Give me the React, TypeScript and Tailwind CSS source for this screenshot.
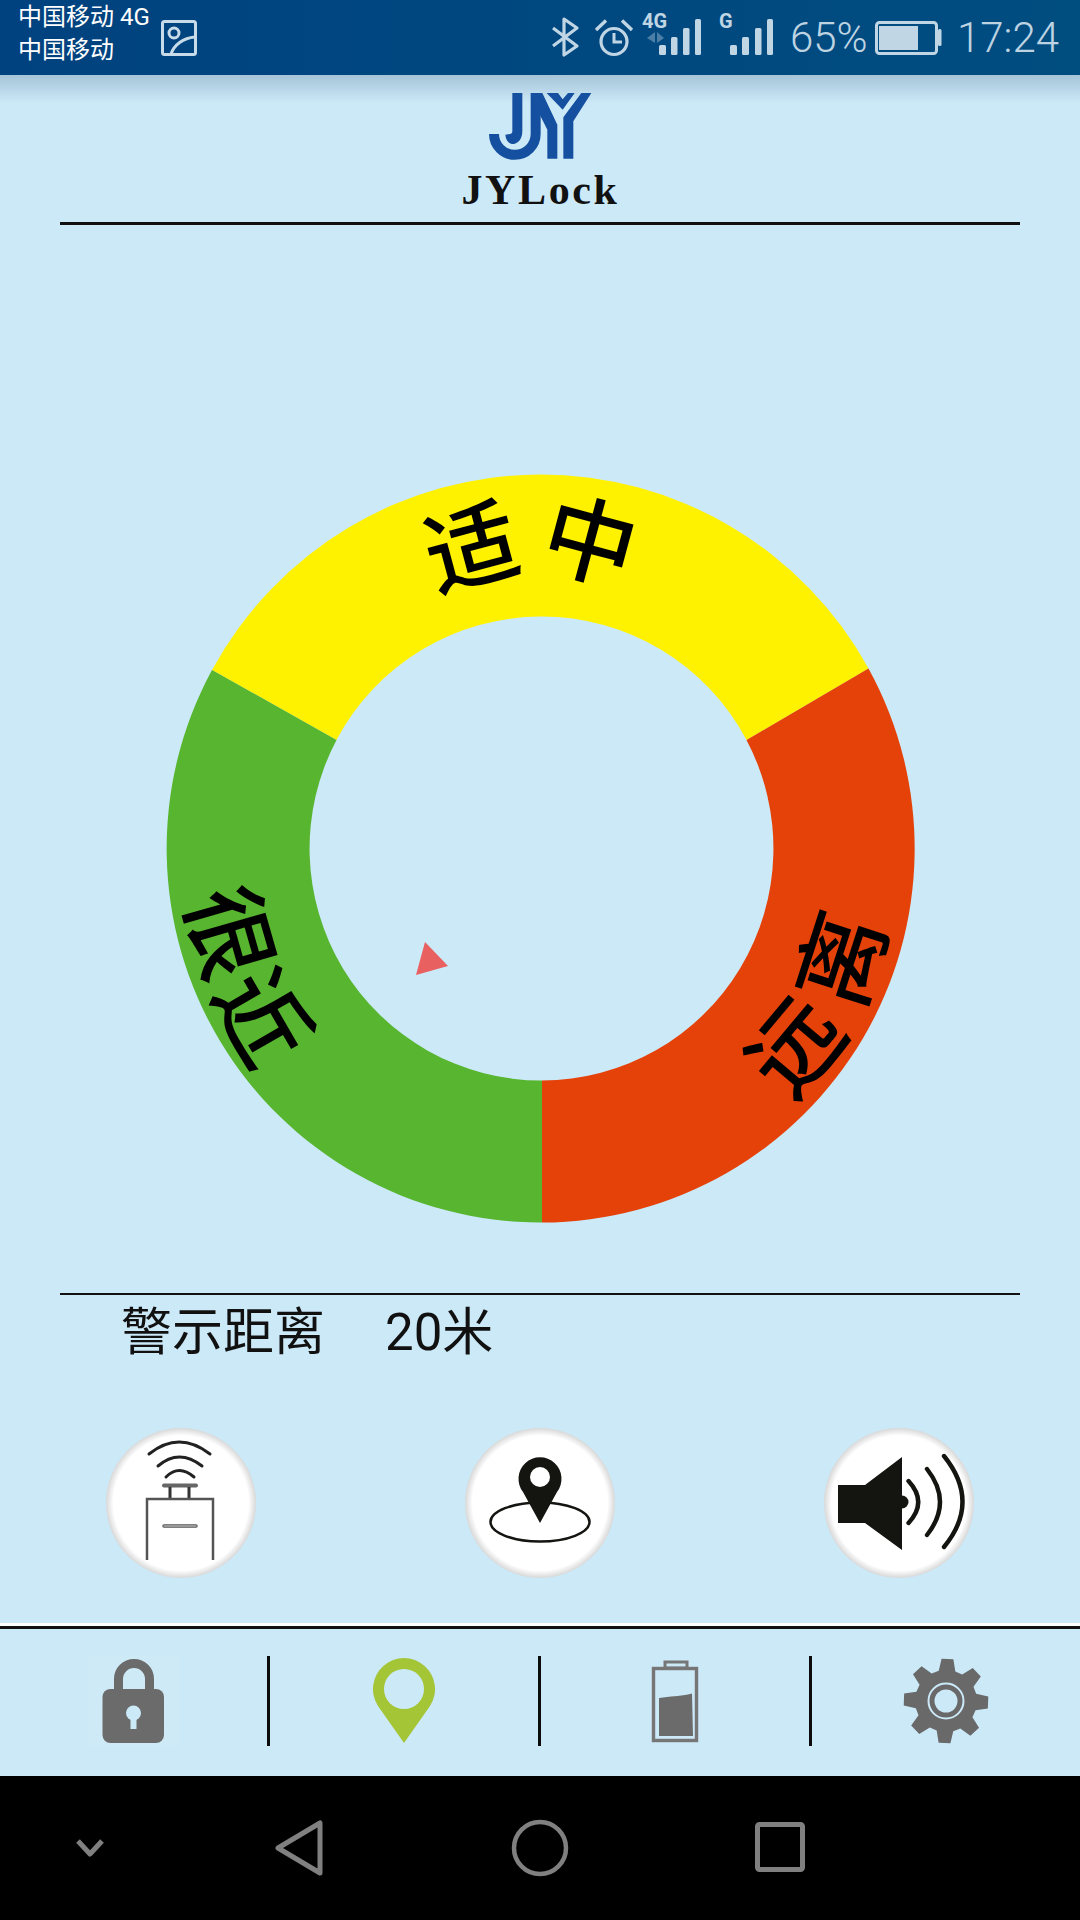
import React from "react";

const cjk = "font-['Roboto','Noto_Sans_CJK_SC',sans-serif]";

function gearPath(cx: number, cy: number, ro: number, ri: number, teeth: number, rot: number) {
  const pts: string[] = [];
  for (let i = 0; i < teeth; i++) {
    const a = rot + (i * 360) / teeth;
    const seq: [number, number][] = [
      [a - 15.5, ri],
      [a - 8, ro],
      [a + 8, ro],
      [a + 15.5, ri],
    ];
    seq.forEach(([d, r]) => {
      const t = ((d - 90) * Math.PI) / 180;
      pts.push(`${(cx + r * Math.cos(t)).toFixed(2)} ${(cy + r * Math.sin(t)).toFixed(2)}`);
    });
  }
  return "M" + pts.join("L") + "Z";
}

function StatusBar() {
  const c = "#c0d6e5";
  return (
    <div className="h-[75px] shrink-0 flex items-center bg-gradient-to-r from-[#00427f] to-[#004d80]">
      <div className={`ml-[18px] mb-[7px] w-[142px] text-[24px] leading-[33px] text-white ${cjk}`}>
        <div>中国移动 4G</div>
        <div>中国移动</div>
      </div>
      <svg width="38" height="38" viewBox="159 18 38 38" fill="none" stroke="#c7dbe9" strokeWidth="3">
        <rect x="161.5" y="20.5" width="33" height="33" rx="2" />
        <circle cx="173" cy="32" r="5" />
        <path d="M170 53 C173 44 182 37 194 36" />
      </svg>
      <svg className="ml-[348px]" width="235" height="75" viewBox="545 0 235 75" fill="none" stroke={c}>
        <path d="M552 28 L576 46 L563 55 V19 L576 28 L552 46" strokeWidth="3.2" strokeLinejoin="round" />
        <circle cx="613" cy="41.5" r="13" strokeWidth="3.2" />
        <path d="M613 33 V42 H621" strokeWidth="3" />
        <path d="M595 30 L605 20.5 M621 20.5 L631 30" strokeWidth="3.4" />
        <text x="641" y="28" fontSize="20" fontWeight="700" fill={c} stroke="none" className="font-['Roboto',sans-serif]">4G</text>
        <text x="718" y="28" fontSize="20" fontWeight="700" fill={c} stroke="none" className="font-['Roboto',sans-serif]">G</text>
        <path d="M646 38 L654 32 V43 Z" fill="#4d7ea5" stroke="none" />
        <path d="M656 32 L663 38 L656 43 Z" fill="#4d7ea5" stroke="none" />
        <g fill={c} stroke="none">
          <rect x="658" y="45" width="7" height="10" rx="1.5" />
          <rect x="670" y="37" width="6.5" height="18" rx="1.5" />
          <rect x="682" y="28" width="6.5" height="27" rx="1.5" />
          <rect x="694" y="19" width="6" height="36" rx="1.5" />
          <rect x="729" y="45" width="7" height="10" rx="1.5" />
          <rect x="741" y="37" width="7" height="18" rx="1.5" />
          <rect x="754" y="28" width="6.5" height="27" rx="1.5" />
          <rect x="766" y="19" width="6" height="36" rx="1.5" />
        </g>
      </svg>
      <div className="ml-[9px] w-[84px] text-[42px] leading-none font-light text-[#bdd3e2] font-['Roboto',sans-serif]">65%</div>
      <svg width="68" height="38" viewBox="874 19 68 38" fill="none">
        <rect x="876.5" y="22.5" width="60" height="31" rx="3" stroke={c} strokeWidth="3" />
        <rect x="879" y="26" width="39" height="24" fill={c} />
        <rect x="938" y="29" width="3.5" height="17" rx="1.5" fill={c} />
      </svg>
      <div className="ml-[15px] text-[42px] leading-none font-light text-[#bdd3e2] font-['Roboto',sans-serif]">17:24</div>
    </div>
  );
}

function Logo() {
  return (
    <div className="h-[147px] shrink-0 flex flex-col items-center">
      <svg className="mt-[18px] ml-[2px]" width="104" height="68" viewBox="205 55 312 204" fill="#1550a0">
        <path d="M220 178 A62 62 0 0 0 345 178 V55" fill="none" stroke="#1550a0" strokeWidth="30" />
        <path d="M275 55 H305 V170 C305 195 290 208 278 208 C265 208 255 197 254 180 L268 178 C272 178 275 176 275 170 Z" />
        <path d="M335 55 H365 L410 150 V252 H380 V165 L335 75 Z" />
        <path d="M378 55 H412 L426 74 L442 55 H462 L426 105 Z" />
        <path d="M482 55 H512 L458 140 V252 H428 V128 Z" />
      </svg>
      <div className="mt-[5px] ml-[1px] text-[42px] leading-[48px] font-bold tracking-[2.6px] text-[#111] font-['Liberation_Serif',serif]">JYLock</div>
    </div>
  );
}

function Glyph({ x, y, r, t }: { x: number; y: number; r: number; t: string }) {
  return (
    <text
      x={0}
      y={0}
      transform={`translate(${x} ${y}) rotate(${r})`}
      textAnchor="middle"
      dominantBaseline="central"
      fontSize="92"
      fontWeight="500"
      fill="#000"
      className="font-['Noto_Sans_CJK_SC',sans-serif]"
    >
      {t}
    </text>
  );
}

function Ring() {
  return (
    <div className="h-[1068px] shrink-0 pt-[145px] pl-[61px]">
      <svg className="overflow-visible" width="960" height="960" viewBox="61 370 960 960">
        <path d="M212 670 A374 374 0 0 1 868.5 668.5 L746.5 740 A232 232 0 0 0 336.5 740 Z" fill="#fff200" />
        <path d="M868.5 668.5 A374 374 0 0 1 542 1222.5 V1080.5 A232 232 0 0 0 746.5 740 Z" fill="#e5420a" />
        <path d="M542 1222.5 A374 374 0 0 1 212 670 L336.5 740 A232 232 0 0 0 542 1080.5 Z" fill="#58b52f" />
        <Glyph x={470} y={541} r={-15} t="适" />
        <Glyph x={592} y={535} r={15} t="中" />
        <Glyph x={236} y={931} r={74} t="很" />
        <Glyph x={268} y={1014} r={60} t="近" />
        <Glyph x={835} y={957} r={-72} t="离" />
        <Glyph x={790} y={1042} r={-50} t="远" />
        <path d="M425 942 L448 966 L416 975 Z" fill="#e96060" />
      </svg>
    </div>
  );
}

function RoundButton({ children, className }: { children: React.ReactNode; className?: string }) {
  return (
    <div className={`relative w-[150px] h-[150px] rounded-full bg-[radial-gradient(circle_closest-side,#ffffff_90%,#d8d8d8_100%)] ${className ?? ""}`}>
      <svg className="absolute left-0 top-0" width="150" height="150" viewBox="0 0 150 150" fill="none">
        {children}
      </svg>
    </div>
  );
}

function Buttons() {
  const ink = "#141410";
  return (
    <div className="h-[149px] shrink-0 flex pl-[106px]">
      <RoundButton>
        <path d="M43 26 Q73 2 104 26" stroke="#222" strokeWidth="3" strokeLinecap="round" />
        <path d="M52 38 Q73 20 96 38" stroke="#222" strokeWidth="3" strokeLinecap="round" />
        <path d="M60 49 Q73 36 88 49" stroke="#222" strokeWidth="3" strokeLinecap="round" />
        <path d="M58 57.5 H90" stroke="#666" strokeWidth="4" strokeLinecap="round" />
        <path d="M64 59 V71 M83 59 V71" stroke="#333" strokeWidth="3" />
        <path d="M41 132 V71 H107 V132" stroke="#555" strokeWidth="2.5" />
        <path d="M58 98 H90" stroke="#555" strokeWidth="3.5" strokeLinecap="round" />
        <path d="M58 98 H90" stroke="#ddd" strokeWidth="1" strokeLinecap="round" />
      </RoundButton>
      <RoundButton className="ml-[209px]">
        <ellipse cx="75" cy="94" rx="49.5" ry="19.5" stroke={ink} strokeWidth="2.5" />
        <path d="M75 95 L58 64 A21.5 21.5 0 1 1 92 64 Z" fill={ink} />
        <circle cx="75" cy="49" r="10" fill="#fff" />
      </RoundButton>
      <RoundButton className="ml-[209px]">
        <path d="M14 57 H41 L78 29 V122 L41 95 H14 Z" fill={ink} />
        <circle cx="78" cy="74" r="6.5" fill={ink} />
        <path d="M84.5 53 Q104 74 84.5 95" stroke={ink} strokeWidth="4.4" strokeLinecap="round" />
        <path d="M103 41 Q129 74 103 107" stroke={ink} strokeWidth="4.4" strokeLinecap="round" />
        <path d="M120 28 Q157 74 120 119" stroke={ink} strokeWidth="4.4" strokeLinecap="round" />
      </RoundButton>
    </div>
  );
}

function Divider() {
  return <div className="w-[3px] h-[90px] shrink-0 bg-[#0c0c0c]" />;
}

function Tabs() {
  const g = "#6b6b6b";
  return (
    <div className="h-[147px] shrink-0 flex items-center pb-[3px]">
      <div className="w-[267px] flex justify-center">
        <svg className="bg-[#cfeaf7]" width="90" height="90" viewBox="0 0 90 90" fill="none">
          <path d="M29.5 36 V23 A15.5 15.5 0 0 1 60.5 23 V36" stroke={g} strokeWidth="9" />
          <rect x="13.5" y="33" width="61.5" height="54" rx="8" fill={g} />
          <circle cx="44.5" cy="57" r="7.5" fill="#cce9f8" />
          <rect x="41.5" y="58" width="6" height="15" fill="#cce9f8" />
        </svg>
      </div>
      <Divider />
      <div className="w-[268px] flex justify-center">
        <svg width="90" height="90" viewBox="0 0 90 90" fill="none">
          <path d="M45 87 L19 50 A31 31 0 1 1 71 50 Z" fill="#a4c535" />
          <circle cx="45" cy="33" r="20" fill="#cce9f8" />
        </svg>
      </div>
      <Divider />
      <div className="w-[268px] flex justify-center">
        <svg width="90" height="90" viewBox="0 0 90 90" fill="none">
          <rect x="23.5" y="12.5" width="43" height="72" stroke="#767676" strokeWidth="3.4" />
          <rect x="35" y="6" width="22" height="6" stroke="#767676" strokeWidth="3" />
          <path d="M29 42 L41 40.5 Q55 39.5 62 37.5 L63 80 H29 Z" fill={g} />
        </svg>
      </div>
      <Divider />
      <div className="w-[268px] flex justify-center">
        <svg width="90" height="90" viewBox="0 0 90 90" fill="none">
          <path d={gearPath(45, 45, 42.5, 31, 8, 2)} fill="#696969" />
          <circle cx="45" cy="45" r="17.5" stroke="#cce9f8" strokeWidth="2" />
          <circle cx="45" cy="45" r="11.5" fill="#cce9f8" />
        </svg>
      </div>
    </div>
  );
}

function NavBar() {
  const c = "#808080";
  return (
    <div className="h-[144px] shrink-0 bg-black flex items-center">
      <svg className="ml-[75px]" width="30" height="18" viewBox="0 0 30 18" fill="none">
        <path d="M3 2 L15 15 L27 2" stroke={c} strokeWidth="5" strokeLinejoin="round" />
      </svg>
      <svg className="ml-[169px]" width="52" height="56" viewBox="0 0 52 56" fill="none">
        <path d="M4 28 L46 3 V53 Z" stroke={c} strokeWidth="5" strokeLinejoin="round" />
      </svg>
      <svg className="ml-[184px]" width="60" height="60" viewBox="0 0 60 60" fill="none">
        <circle cx="30" cy="30" r="26" stroke={c} strokeWidth="4.5" />
      </svg>
      <svg className="ml-[184px] mb-[2px]" width="52" height="52" viewBox="0 0 52 52" fill="none">
        <rect x="3.5" y="3.5" width="45" height="45" rx="2" stroke={c} strokeWidth="5" />
      </svg>
    </div>
  );
}

export default function App() {
  return (
    <div className="relative w-[1080px] h-[1920px] flex flex-col overflow-hidden bg-[#cce9f8]">
      <StatusBar />
      <div className="absolute top-[75px] left-0 w-full h-[28px] bg-gradient-to-b from-[#a5c4d8] to-transparent" />
      <div className="relative">
        <Logo />
      </div>
      <div className="h-[3px] mx-[60px] shrink-0 bg-[#111]" />
      <Ring />
      <div className="h-[2px] mx-[60px] shrink-0 bg-[#111]" />
      <div className={`h-[133px] shrink-0 flex pl-[121px] pt-[4px] text-[51px] leading-[68px] text-[#111] ${cjk}`}>
        <span className="w-[264px]">警示距离</span>
        <span>20米</span>
      </div>
      <Buttons />
      <div className="h-[46px] shrink-0" />
      <div className="h-[3px] shrink-0 bg-white" />
      <div className="h-[3px] shrink-0 bg-[#111]" />
      <Tabs />
      <NavBar />
    </div>
  );
}
